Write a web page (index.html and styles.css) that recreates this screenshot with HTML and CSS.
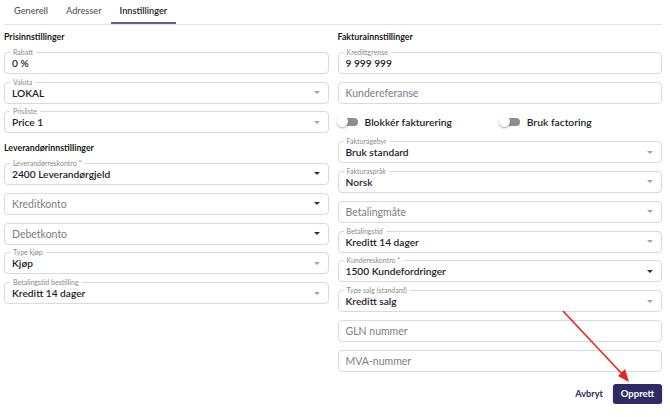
FILE: index.html
```html
<!DOCTYPE html>
<html lang="no">
<head>
    <meta charset="UTF-8">
    <meta name="viewport" content="width=device-width, initial-scale=1.0">
    <title>Kunde - Innstillinger</title>
    <link rel="stylesheet" href="styles.css">
</head>
<body>
    <div class="page">
        <!-- Tabs -->
        <nav class="tabs">
            <span class="tab">Generell</span>
            <span class="tab">Adresser</span>
            <span class="tab active">Innstillinger</span>
        </nav>

        <div class="columns">
            <div class="col">
                <h3>Prisinnstillinger</h3>
                <div class="field"><span class="label">Rabatt</span><span class="value">0 %</span></div>
                <div class="field select"><span class="label">Valuta</span><span class="value">LOKAL</span><span class="caret"></span></div>
                <div class="field select"><span class="label">Prisliste</span><span class="value">Price 1</span><span class="caret"></span></div>

                <h3 class="next">Leverandørinnstillinger</h3>
                <div class="field select"><span class="label">Leverandørreskontro *</span><span class="value">2400 Leverandørgjeld</span><span class="caret dark"></span></div>
                <div class="field select"><span class="placeholder">Kreditkonto</span><span class="caret dark"></span></div>
                <div class="field select"><span class="placeholder">Debetkonto</span><span class="caret dark"></span></div>
                <div class="field select"><span class="label">Type kjøp</span><span class="value">Kjøp</span><span class="caret"></span></div>
                <div class="field select"><span class="label">Betalingstid bestilling</span><span class="value">Kreditt 14 dager</span><span class="caret"></span></div>
            </div>

            <div class="col">
                <h3>Fakturainnstillinger</h3>
                <div class="field"><span class="label">Kredittgrense</span><span class="value">9 999 999</span></div>
                <div class="field"><span class="placeholder">Kundereferanse</span></div>
                <div class="switches">
                    <label class="switch"><span class="track"><span class="thumb"></span></span>Blokkér fakturering</label>
                    <label class="switch"><span class="track"><span class="thumb"></span></span>Bruk factoring</label>
                </div>
                <div class="field select"><span class="label">Fakturagebyr</span><span class="value">Bruk standard</span><span class="caret"></span></div>
                <div class="field select"><span class="label">Fakturaspråk</span><span class="value">Norsk</span><span class="caret"></span></div>
                <div class="field select"><span class="placeholder">Betalingmåte</span><span class="caret"></span></div>
                <div class="field select"><span class="label">Betalingstid</span><span class="value">Kreditt 14 dager</span><span class="caret"></span></div>
                <div class="field select"><span class="label">Kundereskontro *</span><span class="value">1500 Kundefordringer</span><span class="caret dark"></span></div>
                <div class="field select"><span class="label">Type salg (standard)</span><span class="value">Kreditt salg</span><span class="caret"></span></div>
                <div class="field"><span class="placeholder">GLN nummer</span></div>
                <div class="field"><span class="placeholder">MVA-nummer</span></div>

                <div class="actions">
                    <button class="btn-text">Avbryt</button>
                    <button class="btn-primary">Opprett</button>
                </div>
            </div>
        </div>

        <!-- annotation arrow -->
        <svg class="arrow" width="80" height="80" viewBox="0 0 80 80">
            <line x1="2" y1="2" x2="63" y2="67" stroke="#e3241f" stroke-width="1.6"/>
            <polygon points="68,73 57,67 64,60" fill="#e3241f"/>
        </svg>
    </div>
</body>
</html>
```

FILE: styles.css
```css
body {
    margin: 0;
    font-family: 'Lato', 'Noto Sans', sans-serif;
    color: #1d1d2b;
    background: #fff;
}

.page {
    position: relative;
    padding: 0 8px 0 4px;
}

/* Tabs */
.tabs {
    display: flex;
    height: 24px;
    padding-left: 1px;
    border-bottom: 1px solid #e4e4e4;
}

.tab {
    padding: 0 9px;
    font-size: 9.2px;
    line-height: 21px;
    font-weight: 500;
    color: #555;
    border-bottom: 2px solid transparent;
}

.tab.active {
    color: #222;
    font-weight: 600;
    border-bottom-color: #62628f;
}

/* Columns */
.columns {
    display: grid;
    grid-template-columns: 1fr 1fr;
    column-gap: 9px;
    margin-top: 6px;
}

.col {
    display: flex;
    flex-direction: column;
    gap: 7.8px;
}

.col h3 {
    margin: 0 0 1px;
    font-size: 8.8px;
    line-height: 12px;
    font-weight: bold;
    color: #1a1a1a;
}

.col h3.next {
    margin-top: 1px;
}

/* Outlined fields */
.field {
    position: relative;
    display: flex;
    align-items: center;
    height: 22px;
    box-sizing: border-box;
    padding: 0 8px 0 7px;
    border: 1px solid #dadada;
    border-radius: 4px;
}

.field .label {
    position: absolute;
    top: -5px;
    left: 5px;
    padding: 0 3px;
    background: #fff;
    font-size: 7px;
    line-height: 8px;
    color: #8a8a8a;
}

.field .value {
    font-size: 10.2px;
    font-weight: 600;
    color: #1d1d2b;
}

.field .placeholder {
    font-size: 10.5px;
    color: #7d7d85;
}

.caret {
    margin-left: auto;
    width: 0;
    height: 0;
    border-left: 3px solid transparent;
    border-right: 3px solid transparent;
    border-top: 3px solid #a5a5a5;
}

.caret.dark {
    border-top-color: #2b2b4d;
}

/* Switches */
.switches {
    display: grid;
    grid-template-columns: 1fr 1fr;
    align-items: center;
    height: 22px;
}

.switch {
    display: flex;
    align-items: center;
    gap: 7px;
    font-size: 10.3px;
    font-weight: 600;
    color: #1d1d2b;
}

.track {
    position: relative;
    display: block;
    width: 20px;
    height: 8px;
}

.track::before {
    content: "";
    position: absolute;
    left: 5px;
    right: 0;
    top: 0;
    bottom: 0;
    border-radius: 4px;
    background: #8e8e8e;
}

.thumb {
    position: absolute;
    left: -1px;
    top: -2px;
    width: 11px;
    height: 11px;
    border-radius: 50%;
    background: #fff;
    box-shadow: 0 1px 2px rgba(0, 0, 0, 0.35);
}

/* Buttons */
.actions {
    display: flex;
    justify-content: flex-end;
    align-items: center;
    gap: 10px;
    margin-top: 4px;
}

.btn-text {
    border: none;
    background: none;
    padding: 0;
    font-family: inherit;
    font-size: 9.2px;
    font-weight: bold;
    color: #2c2a5e;
}

.btn-primary {
    height: 20px;
    width: 49px;
    border: none;
    border-radius: 3px;
    background: #2e2a66;
    color: #fff;
    font-family: inherit;
    font-size: 9.5px;
    font-weight: bold;
    box-shadow: 0 1px 2px rgba(0, 0, 0, 0.3);
}

.arrow {
    position: absolute;
    left: 561px;
    top: 309px;
}
```
